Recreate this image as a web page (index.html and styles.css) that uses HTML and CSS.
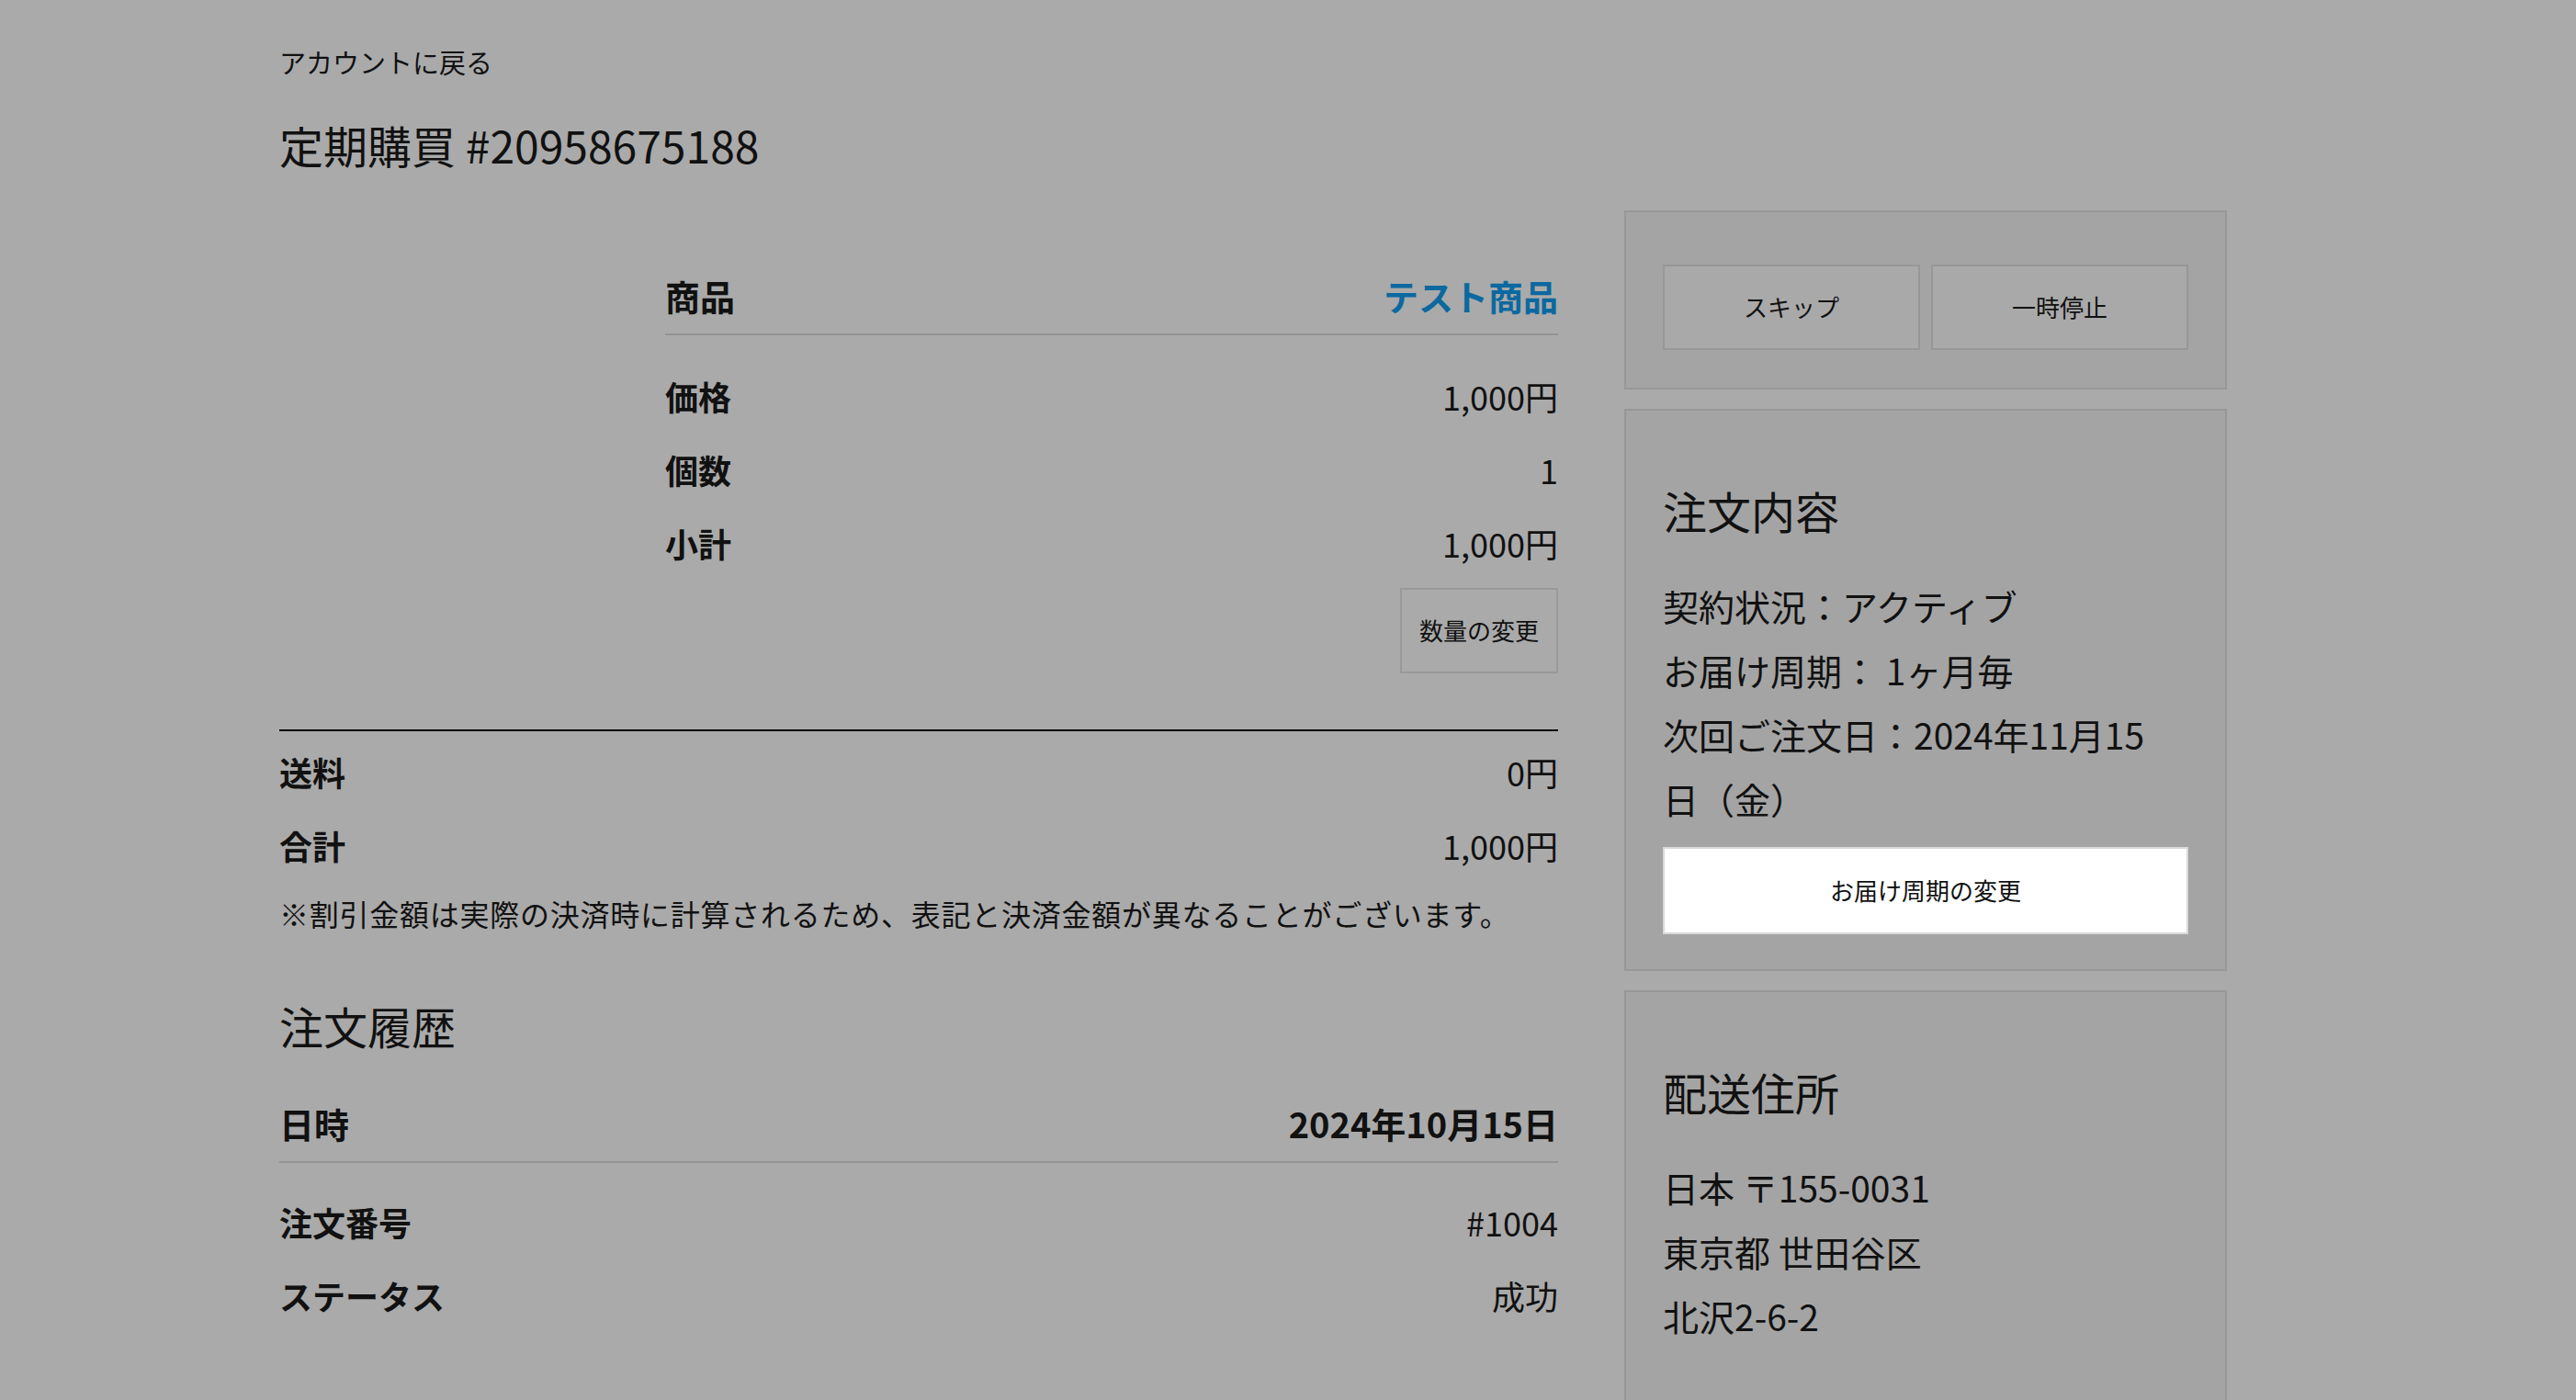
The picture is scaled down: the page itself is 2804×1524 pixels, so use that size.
FILE: index.html
```html
<!DOCTYPE html>
<html lang="ja">
<head>
  <meta charset="UTF-8">
  <meta name="viewport" content="width=device-width, initial-scale=1.0">
  <title>定期購買 | 詳細</title>
  <link rel="stylesheet" href="styles.css">
</head>
<body>
  <div class="page">
    <a class="back_link" href="#">アカウントに戻る</a>
    <h1 class="page_title">定期購買 #20958675188</h1>

    <div class="layout">
      <!-- 左：商品・合計・注文履歴 -->
      <div class="main">
        <div class="product">
          <div class="product_image"></div>
          <div class="product_detail">
            <div class="table_head">
              <span>商品</span>
              <a class="product_link" href="#">テスト商品</a>
            </div>
            <div class="detail_list">
              <div class="detail_row"><span class="detail_label">価格</span><span>1,000円</span></div>
              <div class="detail_row"><span class="detail_label">個数</span><span>1</span></div>
              <div class="detail_row"><span class="detail_label">小計</span><span>1,000円</span></div>
            </div>
            <div class="qty_action">
              <button class="qty_btn">数量の変更</button>
            </div>
          </div>
        </div>

        <div class="totals">
          <div class="detail_row"><span class="detail_label">送料</span><span>0円</span></div>
          <div class="detail_row"><span class="detail_label">合計</span><span>1,000円</span></div>
        </div>
        <p class="note">※割引金額は実際の決済時に計算されるため、表記と決済金額が異なることがございます。</p>

        <h2 class="history_title">注文履歴</h2>
        <div class="table_head history_head">
          <span>日時</span>
          <span>2024年10月15日</span>
        </div>
        <div class="history_list">
          <div class="detail_row"><span class="detail_label">注文番号</span><span>#1004</span></div>
          <div class="detail_row"><span class="detail_label">ステータス</span><span>成功</span></div>
        </div>
      </div>

      <!-- 右：操作・注文内容・配送住所 -->
      <div class="side">
        <div class="side_box actions_box">
          <button class="side_btn">スキップ</button>
          <button class="side_btn">一時停止</button>
        </div>

        <div class="side_box">
          <h3 class="side_title">注文内容</h3>
          <div class="side_text">
            <p>契約状況：アクティブ</p>
            <p>お届け周期： 1ヶ月毎</p>
            <p>次回ご注文日：2024年11月15日（金）</p>
          </div>
          <button class="cycle_btn">お届け周期の変更</button>
        </div>

        <div class="side_box address_box">
          <h3 class="side_title">配送住所</h3>
          <div class="side_text">
            <p>日本 〒155-0031</p>
            <p>東京都 世田谷区</p>
            <p>北沢2-6-2</p>
          </div>
        </div>
      </div>
    </div>
  </div>
</body>
</html>
```

FILE: styles.css
```css
body {
  margin: 0;
  background-color: #aaaaaa;
  color: #111;
  font-family: "Noto Sans CJK JP", sans-serif;
}
.page {
  width: 2120px;
  padding: 46px 0 0 304px;
}
.back_link {
  display: block;
  font-size: 29px;
  line-height: 42px;
  color: #111;
  text-decoration: none;
}
.page_title {
  margin: 30px 0 0;
  font-size: 48px;
  line-height: 78px;
  font-weight: 400;
}
.layout {
  display: grid;
  grid-template-columns: 1392px 656px;
  column-gap: 72px;
  align-items: start;
  margin-top: 33px;
}

/* 商品 */
.product {
  display: flex;
  padding-top: 65px;
}
.product_image {
  width: 420px;
  flex-shrink: 0;
}
.product_detail {
  flex: 1;
}
.table_head {
  display: flex;
  justify-content: space-between;
  padding-bottom: 13px;
  border-bottom: 2px solid #939393;
  font-size: 38px;
  line-height: 56px;
  font-weight: 700;
}
.product_link {
  color: #0c69a0;
  text-decoration: none;
}
.detail_list {
  margin-top: 28px;
}
.detail_row {
  display: flex;
  justify-content: space-between;
  align-items: center;
  box-sizing: border-box;
  height: 80px;
  padding-bottom: 5px;
  font-size: 36px;
}
.detail_label {
  font-weight: 700;
}
.qty_action {
  display: flex;
  justify-content: flex-end;
  margin-top: 7px;
}
.qty_btn {
  height: 93px;
  padding: 0 19px 3px;
  border: 2px solid #999;
  background-color: transparent;
  color: #111;
  font-family: inherit;
  font-size: 26px;
}

/* 合計 */
.totals {
  margin-top: 61px;
  padding-top: 6px;
  border-top: 2px solid #000;
}
.note {
  margin: 8px 0 0;
  font-size: 32px;
  line-height: 48px;
  letter-spacing: 0.75px;
}

/* 注文履歴 */
.history_title {
  margin: 62px 0 0;
  font-size: 48px;
  line-height: 72px;
  font-weight: 400;
}
.history_head {
  margin-top: 43px;
}
.history_list {
  margin-top: 26px;
}

/* 右カラム */
.side {
  display: flex;
  flex-direction: column;
  gap: 21px;
}
.side_box {
  border: 2px solid #979797;
  background-color: #a4a4a4;
  padding: 0 40px 38px;
}
.actions_box {
  display: flex;
  gap: 12px;
  padding-top: 57px;
  padding-bottom: 41px;
}
.side_btn {
  flex: 1;
  height: 93px;
  padding-bottom: 3px;
  border: 2px solid #979797;
  background-color: #a9a9a9;
  color: #111;
  font-family: inherit;
  font-size: 26px;
}
.side_title {
  margin: 72px 0 0;
  font-size: 48px;
  line-height: 72px;
  font-weight: 400;
}
.side_text {
  margin-top: 33px;
  padding-right: 20px;
  font-size: 39px;
  line-height: 70px;
}
.side_text p {
  margin: 0;
}
.cycle_btn {
  display: block;
  width: 100%;
  height: 95px;
  margin-top: 18px;
  padding-bottom: 3px;
  border: 2px solid #d9d9d9;
  background-color: #fff;
  color: #111;
  font-family: inherit;
  font-size: 26px;
}
.address_box {
  padding-bottom: 80px;
}
```
